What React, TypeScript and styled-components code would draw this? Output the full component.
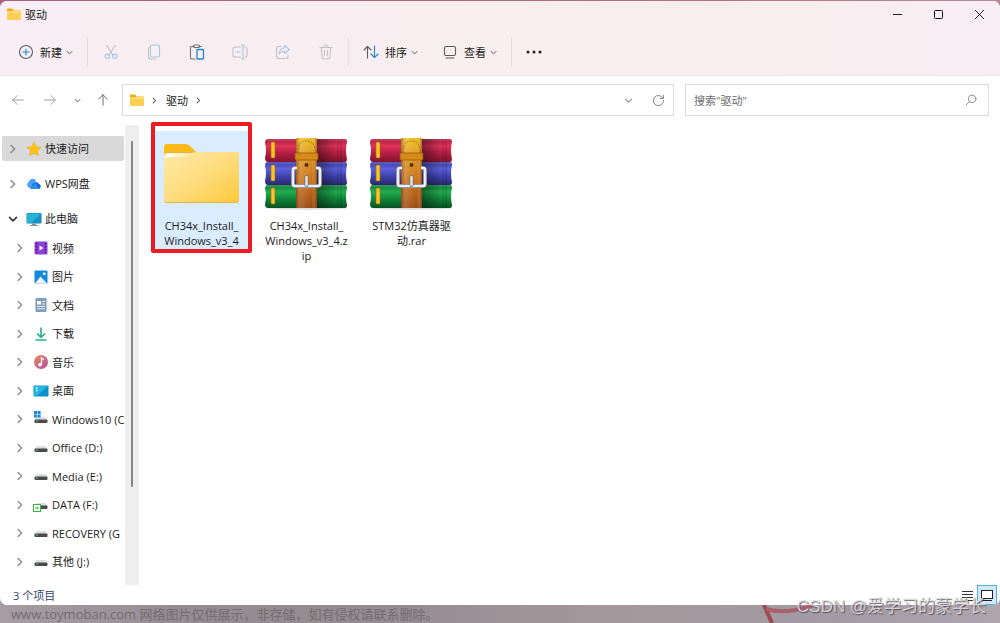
import React from "react";
import styled, { createGlobalStyle, css } from "styled-components";

const GlobalStyle = createGlobalStyle`
  *, *::before, *::after { box-sizing: border-box; }
  body { margin: 0; font: 11px/15px "Open Sans", "Noto Sans CJK SC", sans-serif; color: #1b1b1b; }
  button, input { font: inherit; color: inherit; border: 0; background: none; padding: 0; margin: 0; }
  ul { list-style: none; margin: 0; padding: 0; }
  svg { display: block; flex: none; }
`;

const Desktop = styled.div`
  position: relative;
  min-height: 100vh;
  padding-top: 1px;
  display: flex;
  flex-direction: column;
  overflow: hidden;
  background:
    linear-gradient(90deg, #a8647a, #ab6c7c 60%, #b98a95) top / 100% 12px no-repeat,
    linear-gradient(90deg, #a89ca4, #948c90 20%, #978d92 42%, #a5989c 60%, #a39a9f 76%, #a29ba6 84%, #b0a5ad);
`;

const Window = styled.main`
  position: relative;
  flex: 1;
  display: flex;
  flex-direction: column;
  background: #fff;
  border-radius: 7px;
  overflow: hidden;
`;

const Header = styled.header`
  background: linear-gradient(90deg, #f8eef3, #f9eff1 50%, #f8eef0 80%, #f8edf3);
  border-bottom: 1px solid #efe8ea;
`;

const TitleBar = styled.div`
  height: 26px;
  display: flex;
  align-items: center;
  justify-content: space-between;
`;

const Title = styled.h1`
  display: flex;
  align-items: center;
  gap: 4px;
  margin: 0;
  padding-left: 7px;
  font-size: 11px;
  font-weight: 400;
`;

const Controls = styled.div`
  display: flex;
`;

const ControlButton = styled.button`
  width: 41px;
  height: 25px;
  display: grid;
  place-items: center;
`;

const Toolbar = styled.div`
  height: 48px;
  padding-top: 2px;
  display: flex;
  align-items: center;
`;

const ToolGroup = styled.div<{ $pad: string }>`
  display: flex;
  align-items: center;
  padding: ${(p) => p.$pad};
`;

const ToolButton = styled.button<{ $labelled?: boolean }>`
  height: 28px;
  display: flex;
  align-items: center;
  justify-content: center;
  width: ${(p) => (p.$labelled ? "auto" : "43px")};
  gap: 4px;
`;

const ToolLabel = styled.span`
  padding-left: 2px;
`;

const Divider = styled.span`
  width: 1px;
  height: 28px;
  background: #e6dde0;
`;

const NavBar = styled.nav`
  display: flex;
  align-items: center;
  padding: 8px 11px 9px 2px;
`;

const NavButton = styled.button<{ $w: number }>`
  width: ${(p) => p.$w}px;
  height: 28px;
  display: grid;
  place-items: center;
`;

const Fields = styled.div`
  flex: 1;
  display: grid;
  grid-template-columns: minmax(0, 552fr) minmax(0, 304fr);
  gap: 11px;
  margin-left: 4px;
`;

const fieldBox = css`
  height: 32px;
  border: 1px solid #dcdcdc;
  display: flex;
  align-items: center;
`;

const AddressBar = styled.div`
  ${fieldBox}
  padding-left: 7px;
`;

const Crumbs = styled.div`
  flex: 1;
  display: flex;
  align-items: center;
  gap: 7px;
`;

const Crumb = styled.a`
  padding-left: 1px;
  color: inherit;
  text-decoration: none;
`;

const SearchBox = styled.label`
  ${fieldBox}
  padding: 0 11px 0 8px;
`;

const SearchInput = styled.input`
  flex: 1;
  min-width: 0;
  outline: 0;
  &::placeholder { color: #6b6b6b; opacity: 1; }
`;

const Body = styled.div`
  flex: 1;
  display: flex;
`;

const Sidebar = styled.aside`
  width: 125px;
  padding: 11px 1px 9px 2px;
  overflow: hidden;
`;

const RootList = styled.ul`
  display: grid;
  gap: 10px;
`;

const DeviceList = styled.ul`
  display: grid;
  grid-auto-rows: 1fr;
  height: 342px;
  margin-top: 3px;
`;

const TreeItem = styled.li<{ $nested?: boolean; $selected?: boolean }>`
  display: flex;
  align-items: center;
  height: ${(p) => (p.$nested ? "auto" : "25px")};
  padding-left: ${(p) => (p.$nested ? "13px" : "6px")};
  border-radius: 2px;
  background: ${(p) => (p.$selected ? "#d9d9d9" : "transparent")};
  white-space: nowrap;
`;

const TreeIcon = styled.span`
  width: 16px;
  display: grid;
  place-items: center;
  flex: none;
  margin: 0 3px 0 8px;
`;

const ScrollTrack = styled.div`
  width: 14px;
  background: #eeeeee;
  padding: 16px 6px 0;
`;

const ScrollThumb = styled.div`
  width: 2px;
  height: 346px;
  border-radius: 1px;
  background: #868686;
`;

const Files = styled.ul`
  flex: 1;
  display: flex;
  flex-wrap: wrap;
  align-content: flex-start;
  gap: 10px;
  && { padding: 6px 0 0 15px; }
`;

const FileTile = styled.li<{ $selected?: boolean }>`
  position: relative;
  width: 95px;
  height: 119px;
  padding-top: 4px;
  display: flex;
  flex-direction: column;
  align-items: center;
  background: ${(p) => (p.$selected ? "#d9edfe" : "transparent")};
  text-align: center;
`;

const FileName = styled.span`
  margin-top: 3px;
  white-space: nowrap;
  span { display: block; }
`;

const Marker = styled.span`
  position: absolute;
  inset: -9px -3px -3px -3px;
  border: 4px solid #ec1c24;
  border-radius: 2px;
`;

const StatusBar = styled.footer`
  height: 20px;
  display: flex;
  align-items: center;
  padding: 0 3px 0 13px;
  color: #33456b;
`;

const StatusText = styled.span`
  flex: 1;
`;

const ViewButton = styled.button<{ $active?: boolean }>`
  width: 20px;
  height: 20px;
  display: grid;
  place-items: center;
  border: 1px solid ${(p) => (p.$active ? "#4fb3e4" : "transparent")};
  background: ${(p) => (p.$active ? "#cfe9f8" : "transparent")};
`;

const Caption = styled.p`
  margin: 0;
  height: 18px;
  padding-left: 11px;
  font-size: 13px;
  line-height: 18px;
  color: #746c70;
  white-space: nowrap;
`;

const Signature = styled.span`
  position: absolute;
  right: 14px;
  bottom: 3px;
  font: 17px/26px "Liberation Sans", "Noto Sans CJK SC", sans-serif;
  color: rgba(225, 222, 226, 0.85);
  text-shadow: 1px 1px 1px rgba(70, 65, 70, 0.8);
  white-space: nowrap;
`;

const Ribbon = styled.svg`
  position: absolute;
  right: 130px;
  bottom: 0;
`;

type Dir = "right" | "down";
function Chevron({ dir, size = 8, color = "#8f8f8f", weight = 1.2 }: { dir: Dir; size?: number; color?: string; weight?: number }) {
  return (
    <svg width={size} height={size} viewBox="0 0 8 8" fill="none" stroke={color} strokeWidth={weight} strokeLinecap="round" strokeLinejoin="round">
      <path d={dir === "right" ? "M2.5 1.2 5.3 4 2.5 6.8" : "M1.2 2.7 4 5.5 6.800 2.7"} />
    </svg>
  );
}

function Line({ size = 16, children, color = "#5c5c5c" }: { size?: number; children: React.ReactNode; color?: string }) {
  return (
    <svg width={size} height={size} viewBox="0 0 16 16" fill="none" stroke={color} strokeWidth="1.1" strokeLinecap="round" strokeLinejoin="round">
      {children}
    </svg>
  );
}

function SmallFolder() {
  return (
    <svg width="14" height="12" viewBox="0 0 14 12">
      <path d="M0 1.5Q0 .5 1 .5H5L7 2.5H13Q14 2.5 14 3.5V6H0Z" fill="#f0a912" />
      <rect y="3" width="14" height="9" rx="1" fill="#fdd055" />
      <path d="M0 4Q0 3.500 1 3.500H5L6.500 2.4H13Q14 2.4 14 3.4V5H0Z" fill="#ffdc78" />
    </svg>
  );
}

function BigFolder() {
  return (
    <svg width="76" height="80" viewBox="1 0 76 80">
      <defs>
        <linearGradient id="folderFront" x1="0" y1="0" x2="1" y2="1">
          <stop offset="0" stopColor="#ffe9a6" />
          <stop offset=".5" stopColor="#fedd80" />
          <stop offset="1" stopColor="#fec93a" />
        </linearGradient>
        <linearGradient id="folderShine" x1="0" y1="0" x2="1" y2="0">
          <stop offset="0" stopColor="#fff" />
          <stop offset="1" stopColor="#ffe08a" />
        </linearGradient>
      </defs>
      <path d="M1 12Q1 9 4 9H22Q25 9 27 11L33 17H72Q75 17 75 20V30H1Z" fill="#fbb917" />
      <rect x="1" y="17" width="75" height="51" rx="3" fill="#e8b43c" />
      <path d="M1 21Q1 18 4 18H28L33 17H73Q76 17 76 20V64Q76 67 73 67H4Q1 67 1 64Z" fill="url(#folderFront)" />
      <path d="M2 23Q2 18 6 18H33Q29 22 23 22H7Q3 22 2 24Z" fill="url(#folderShine)" />
    </svg>
  );
}

function Book({ y, fill }: { y: number; fill: string }) {
  return (
    <g transform={`translate(0 ${y})`}>
      <path d="M3 0H80Q82 0 82 3 80 11 82 20 82 23 80 23H3Q0 23 0 19 2 11 0 4 0 0 3 0Z" fill={`url(#${fill})`} />
      <path d="M73 0V23M76 0V23" stroke="#000" strokeOpacity=".22" strokeWidth="1" />
      <path d="M2 1H81" stroke="#fff" strokeOpacity=".25" />
      <rect x="6" y="3" width="4" height="16" rx="1" fill="#f6c52c" stroke="#a86a10" strokeWidth=".7" />
    </g>
  );
}

function Archive() {
  const shades: [string, string, string, string][] = [
    ["bookRed", "#b01c40", "#df3359", "#80152f"],
    ["bookBlue", "#3c3fa8", "#5c60dc", "#29296f"],
    ["bookGreen", "#0e7f36", "#22ad50", "#065222"],
  ];
  return (
    <svg width="84" height="80" viewBox="0 0 84 80">
      <defs>
        {shades.map(([id, a, b, c]) => (
          <linearGradient key={id} id={id} x1="0" y1="0" x2="0" y2="1">
            <stop offset="0" stopColor={a} />
            <stop offset=".3" stopColor={b} />
            <stop offset=".65" stopColor={a} />
            <stop offset="1" stopColor={c} />
          </linearGradient>
        ))}
        <linearGradient id="strap" x1="0" y1="0" x2="0" y2="1">
          <stop offset="0" stopColor="#efc022" />
          <stop offset=".25" stopColor="#dc961e" />
          <stop offset=".6" stopColor="#cc7218" />
          <stop offset="1" stopColor="#99490e" />
        </linearGradient>
        <linearGradient id="strapSide">
          <stop offset="0" stopColor="#5a2a04" stopOpacity=".45" />
          <stop offset=".25" stopColor="#fff" stopOpacity=".15" />
          <stop offset=".75" stopColor="#fff" stopOpacity="0" />
          <stop offset="1" stopColor="#5a2a04" stopOpacity=".5" />
        </linearGradient>
        <linearGradient id="bookShade">
          <stop offset="0" stopColor="#000" stopOpacity=".4" />
          <stop offset="1" stopColor="#000" stopOpacity="0" />
        </linearGradient>
      </defs>
      <ellipse cx="42" cy="73" rx="40" ry="2" fill="#000" opacity=".12" />
      <Book y={4} fill="bookRed" />
      <Book y={27} fill="bookBlue" />
      <Book y={50} fill="bookGreen" />
      <rect x="52" y="4" width="20" height="69" fill="url(#bookShade)" />
      <rect x="31" y="3" width="21" height="70" rx="1" fill="url(#strap)" />
      <rect x="31" y="3" width="21" height="70" rx="1" fill="url(#strapSide)" />
      <path d="M33 18V14Q34 6 41.500 6T50 14V18" fill="none" stroke="#a8660c" strokeWidth=".9" strokeDasharray="2 1" />
      <rect x="30" y="18" width="23" height="7" rx="1" fill="#d58b18" stroke="#925010" strokeWidth=".7" />
      <circle cx="41.500" cy="30" r="2" fill="#5b2c08" />
      <path d="M32 33H30Q28 33 28 35V49Q28 51 30 51H53Q55 51 55 49V35Q55 33 53 33H51" fill="none" stroke="#77797f" strokeWidth="3.800" />
      <path d="M32 33H30Q28 33 28 35V49Q28 51 30 51H53Q55 51 55 49V35Q55 33 53 33H51" fill="none" stroke="#eceef2" strokeWidth="2.600" />
      <path d="M41.500 42V50" stroke="#6d6f76" strokeWidth="4" strokeLinecap="round" />
      <path d="M41.500 42V50" stroke="#e6e8ed" strokeWidth="2.400" strokeLinecap="round" />
    </svg>
  );
}

const Small = ({ children }: { children: React.ReactNode }) => (
  <svg width="16" height="16" viewBox="0 0 16 16">{children}</svg>
);

const Drive = ({ kind }: { kind?: "windows" | "shared" }) => (
  <Small>
    <path d="M3.500 6H12.500L14 9H2Z" fill="#dedede" />
    <rect x="1.500" y="8.500" width="13" height="3.500" rx="1" fill="#4a4a4a" />
    {kind === "windows" && <path d="M1 0H4V3H1ZM4.600 0H7.600V3H4.600ZM1 3.600H4V6.600H1ZM4.600 3.600H7.600V6.600H4.600Z" fill="#1687dc" />}
    {kind === "shared" ? (
      <g>
        <rect x=".5" y="7.500" width="7" height="7" fill="#fff" stroke="#32b83a" />
        <path d="M2 11H5M4 9.500 5.500 11 4 12.500" stroke="#32b83a" fill="none" />
      </g>
    ) : (
      <rect x="3" y="9.500" width="2" height="1.200" fill="#39c45a" />
    )}
  </Small>
);

const icons = {
  star: <Small><path d="M8 1.200 10.100 5.700 15 6.300 11.400 9.700 12.400 14.600 8 12.200 3.600 14.600 4.600 9.700 1 6.300 5.900 5.700Z" fill="#fdc31a" stroke="#f2a90c" strokeWidth=".6" strokeLinejoin="round" /></Small>,
  cloud: <Small><path d="M4 12A3.400 3.400 0 0 1 2.800 5.700 4 4 0 0 1 10 4.500L6 12Z" fill="#4aa3fb" /><path d="M5.500 13A6 6 0 0 1 9.500 6 3.500 3.500 0 0 1 12.800 7.800 2.700 2.700 0 0 1 12.800 13Z" fill="#1766db" /><path d="M4 13 9.500 6 12.500 13Z" fill="#2d8bf2" /></Small>,
  pc: <Small><rect x=".5" y="2" width="15" height="10.500" rx="1" fill="#147fae" /><rect x="1" y="2.500" width="14" height="9.500" fill="#25b4d6" /><path d="M15 2.500V12H5Z" fill="#168fca" /><path d="M6 12.500H10V14H12V15H4V14H6Z" fill="#7c98a8" /></Small>,
  video: <Small><rect x="1.500" y="1.500" width="13" height="13" rx="1.500" fill="#8c40d8" /><path d="M3.500 3V13M12.500 3V13" stroke="#42147a" strokeWidth="1.500" strokeDasharray="1.500 1.500" /><path d="M6.500 5.500 10.500 8 6.500 10.500Z" fill="#fff" /></Small>,
  picture: <Small><rect x="1.500" y="1.500" width="13" height="13" rx="1" fill="#128bdd" /><path d="M2 14.500 7.500 7.500 14 14.500Z" fill="#f2f9ff" /><circle cx="11.200" cy="4.800" r="1.400" fill="#fff" /></Small>,
  doc: <Small><rect x="2.500" y="1" width="11" height="14" rx="1" fill="#7f9cba" /><rect x="4" y="4" width="4" height="3.500" fill="#fff" /><path d="M9.200 4.500H12M9.200 7H12M4 9.500H12M4 11.800H12" stroke="#e9f1f8" /></Small>,
  download: <Small><path d="M8 1.500V11M4 7.500 8 11.300 12 7.500" stroke="#22b194" strokeWidth="1.600" fill="none" /><path d="M2.500 14H13.500" stroke="#22b194" strokeWidth="1.500" /></Small>,
  music: <Small><defs><linearGradient id="music" x1="0" y1="0" x2="1" y2="1"><stop offset="0" stopColor="#ef8758" /><stop offset="1" stopColor="#b0509e" /></linearGradient></defs><circle cx="8" cy="8" r="7" fill="url(#music)" /><path d="M8.500 10.500V4L11 5.500" stroke="#fff" strokeWidth="1.400" fill="none" /><circle cx="7" cy="10.800" r="1.800" fill="#fff" /></Small>,
  desk: <Small><rect x=".5" y="2.500" width="15" height="11" rx="1" fill="#0c90cc" /><path d="M1 3H15L4 13H1Z" fill="#22b5de" /><path d="M3 5H4.500M3 7.500H4.500" stroke="#fff" strokeWidth="1.300" /></Small>,
};

const roots = [
  { label: "快速访问", icon: icons.star, selected: true },
  { label: "WPS网盘", icon: icons.cloud },
  { label: "此电脑", icon: icons.pc, open: true },
];

const devices = [
  { label: "视频", icon: icons.video },
  { label: "图片", icon: icons.picture },
  { label: "文档", icon: icons.doc },
  { label: "下载", icon: icons.download },
  { label: "音乐", icon: icons.music },
  { label: "桌面", icon: icons.desk },
  { label: "Windows10 (C", icon: <Drive kind="windows" /> },
  { label: "Office (D:)", icon: <Drive /> },
  { label: "Media (E:)", icon: <Drive /> },
  { label: "DATA (F:)", icon: <Drive kind="shared" /> },
  { label: "RECOVERY (G", icon: <Drive /> },
  { label: "其他 (J:)", icon: <Drive /> },
];

const files = [
  { lines: ["CH34x_Install_", "Windows_v3_4"], icon: <BigFolder />, selected: true },
  { lines: ["CH34x_Install_", "Windows_v3_4.z", "ip"], icon: <Archive /> },
  { lines: ["STM32仿真器驱", "动.rar"], icon: <Archive /> },
];

const BLUE = "#1a86d9";
const PALE = "#a3c9ec";
const FADED = "#c6bfc4";

export default function App() {
  return (
    <>
      <GlobalStyle />
      <Desktop>
        <Window>
          <Header>
            <TitleBar>
              <Title><SmallFolder />驱动</Title>
              <Controls>
                <ControlButton aria-label="最小化">
                  <svg width="9" height="9" viewBox="0 0 9 9" stroke="#222"><path d="M0 4.500H9" /></svg>
                </ControlButton>
                <ControlButton aria-label="最大化">
                  <svg width="9" height="9" viewBox="0 0 9 9" stroke="#111" fill="none"><rect x=".5" y=".5" width="8" height="8" rx="1" /></svg>
                </ControlButton>
                <ControlButton aria-label="关闭">
                  <svg width="9" height="9" viewBox="0 0 9 9" stroke="#222"><path d="M0 0 9 9M9 0 0 9" /></svg>
                </ControlButton>
              </Controls>
            </TitleBar>
            <Toolbar>
              <ToolGroup $pad="0 14px 0 18px">
                <ToolButton $labelled>
                  <Line><circle cx="8" cy="8" r="6.500" /><path d="M8 5V11M5 8H11" stroke={BLUE} /></Line>
                  <ToolLabel>新建</ToolLabel>
                  <Chevron dir="down" size={7} />
                </ToolButton>
              </ToolGroup>
              <Divider />
              <ToolGroup $pad="0 1px">
                <ToolButton aria-label="剪切">
                  <Line color={FADED}><path d="M3.800 1.500 10 11M12.200 1.500 6 11" /><g stroke={PALE}><circle cx="4.300" cy="12.300" r="2.200" /><circle cx="11.700" cy="12.300" r="2.200" /></g></Line>
                </ToolButton>
                <ToolButton aria-label="复制">
                  <Line color={FADED}><path d="M4 3Q2.500 3 2.500 5V12Q2.500 15 5 15H10" /><rect x="4.500" y="1" width="9" height="12" rx="1.500" stroke={PALE} /></Line>
                </ToolButton>
                <ToolButton aria-label="粘贴">
                  <Line color="#77706f"><path d="M5 2.500H2.500Q1.500 2.500 1.500 3.500V14Q1.500 15 2.500 15H6M10 2.500H12.500" /><rect x="4.500" y="1" width="6" height="2.500" rx="1" /><rect x="8" y="5.500" width="6.500" height="9.500" rx=".5" stroke={BLUE} strokeWidth="1.300" /></Line>
                </ToolButton>
                <ToolButton aria-label="重命名">
                  <Line color={FADED}><path d="M8.500 3H3Q1 3 1 5V11Q1 13 3 13H8.500M13 3Q15 3 15 5V11Q15 13 13 13" /><path d="M4 8H8M11 1V15M9.500 1H12.500M9.500 15H12.500" stroke={PALE} /></Line>
                </ToolButton>
                <ToolButton aria-label="共享">
                  <Line color={FADED}><path d="M6 2.500H4Q1.500 2.500 1.500 5V12Q1.500 14.500 4 14.500H11Q13 14.500 13 12V11" /><path d="M9.500 1.500 14.500 5.500 9.500 9.500V7.300Q6 7 4 10 4.500 4.500 9.500 3.700Z" stroke={PALE} /></Line>
                </ToolButton>
                <ToolButton aria-label="删除">
                  <Line color={FADED}><path d="M2 3.500H14M6 3Q6 1 8 1T10 3M3.200 3.500 4.200 13.500Q4.400 15 6 15H10Q11.600 15 11.800 13.500L12.800 3.500M6.500 6.500V11.500M9.500 6.500V11.500" /></Line>
                </ToolButton>
              </ToolGroup>
              <Divider />
              <ToolGroup $pad="0 24px 0 14px">
                <ToolButton $labelled>
                  <Line><path d="M4.500 14V2.500M1 6 4.500 2.500 8 6" /><path d="M11.500 2V13.500M8 10 11.500 13.500 15 10" stroke={BLUE} /></Line>
                  <ToolLabel>排序</ToolLabel>
                  <Chevron dir="down" size={7} />
                </ToolButton>
              </ToolGroup>
              <ToolGroup $pad="0 14px 0 0">
                <ToolButton $labelled>
                  <Line><rect x="2.500" y="2.500" width="11" height="9" rx="1.500" /><path d="M4 14H12" /></Line>
                  <ToolLabel>查看</ToolLabel>
                  <Chevron dir="down" size={7} />
                </ToolButton>
              </ToolGroup>
              <Divider />
              <ToolButton aria-label="更多">
                <svg width="16" height="4" viewBox="0 0 16 4" fill="#222"><circle cx="2" cy="2" r="1.500" /><circle cx="8" cy="2" r="1.500" /><circle cx="14" cy="2" r="1.500" /></svg>
              </ToolButton>
            </Toolbar>
          </Header>
          <NavBar>
            <NavButton $w={32} aria-label="后退"><Line size={14} color="#9a9a9a"><path d="M14 8H2M7 3 2 8 7 13" /></Line></NavButton>
            <NavButton $w={32} aria-label="前进"><Line size={14} color="#9a9a9a"><path d="M2 8H14M9 3 14 8 9 13" /></Line></NavButton>
            <NavButton $w={22} aria-label="最近位置"><Chevron dir="down" size={7} /></NavButton>
            <NavButton $w={30} aria-label="上移"><Line size={14} color="#666"><path d="M8 14V2M3 7 8 2 13 7" /></Line></NavButton>
            <Fields>
              <AddressBar>
                <Crumbs>
                  <SmallFolder />
                  <Chevron dir="right" size={7} color="#555" />
                  <Crumb href="#">驱动</Crumb>
                  <Chevron dir="right" size={7} color="#555" />
                </Crumbs>
                <NavButton $w={30} aria-label="历史记录"><Chevron dir="down" size={9} weight={1} /></NavButton>
                <NavButton $w={30} aria-label="刷新"><Line size={13} color="#777"><path d="M13.500 5A6.300 6.300 0 1 0 14.300 8M14 1.500V5.500H10" /></Line></NavButton>
              </AddressBar>
              <SearchBox>
                <SearchInput aria-label="搜索" placeholder={'搜索"驱动"'} />
                <Line size={12} color="#777"><circle cx="9.500" cy="6.500" r="5" /><path d="M6 10 1.500 14.500" /></Line>
              </SearchBox>
            </Fields>
          </NavBar>
          <Body>
            <Sidebar>
              <RootList>
                {roots.map((r) => (
                  <TreeItem key={r.label} $selected={r.selected}>
                    <Chevron dir={r.open ? "down" : "right"} size={10} color={r.open ? "#333" : "#8a8a8a"} />
                    <TreeIcon>{r.icon}</TreeIcon>
                    {r.label}
                  </TreeItem>
                ))}
              </RootList>
              <DeviceList>
                {devices.map((d) => (
                  <TreeItem key={d.label} $nested>
                    <Chevron dir="right" size={10} />
                    <TreeIcon>{d.icon}</TreeIcon>
                    {d.label}
                  </TreeItem>
                ))}
              </DeviceList>
            </Sidebar>
            <ScrollTrack><ScrollThumb /></ScrollTrack>
            <Files>
              {files.map((f, i) => (
                <FileTile key={i} $selected={f.selected}>
                  {f.icon}
                  <FileName>{f.lines.map((l) => <span key={l}>{l}</span>)}</FileName>
                  {f.selected && <Marker />}
                </FileTile>
              ))}
            </Files>
          </Body>
          <StatusBar>
            <StatusText>3 个项目</StatusText>
            <ViewButton aria-label="详细信息">
              <svg width="11" height="11" viewBox="0 0 11 11" stroke="#333"><path d="M0 1.500H11M0 4.500H11M0 7.500H11M0 10.500H11" /></svg>
            </ViewButton>
            <ViewButton $active aria-label="大图标">
              <svg width="12" height="12" viewBox="0 0 12 12" stroke="#222" fill="none"><rect x=".5" y="1.500" width="11" height="8" fill="#fff" /><path d="M1 11.500H11" /></svg>
            </ViewButton>
          </StatusBar>
        </Window>
        <Ribbon width="110" height="18" viewBox="0 0 110 18" fill="none">
          <path d="M4 0 12 18" stroke="#9a4a50" strokeWidth="4" />
          <path d="M6 4Q25 10 54 0" stroke="#a8606a" strokeWidth="4" />
        </Ribbon>
        <Caption>www.toymoban.com 网络图片仅供展示，非存储，如有侵权请联系删除。</Caption>
        <Signature>CSDN @爱学习的蒙学长</Signature>
      </Desktop>
    </>
  );
}
